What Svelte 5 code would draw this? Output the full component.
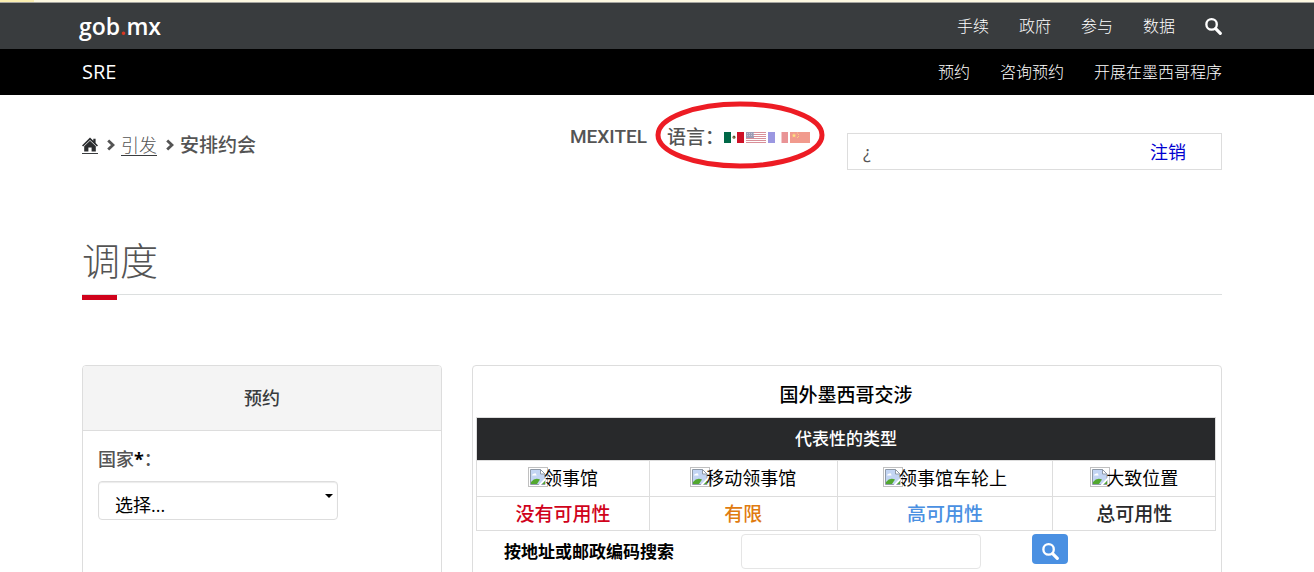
<script lang="ts">
	const topLinks = ['手续', '政府', '参与', '数据'];
	const subLinks = ['预约', '咨询预约', '开展在墨西哥程序'];
	const offices = ['领事馆', '移动领事馆', '领事馆车轮上', '大致位置'];
	const availability = [
		{ label: '没有可用性', tone: 'none' },
		{ label: '有限', tone: 'limited' },
		{ label: '高可用性', tone: 'high' },
		{ label: '总可用性', tone: 'total' },
	];

	let country = $state('');
	let address = $state('');
</script>

{#snippet magnifier()}
	<svg class="magnifier" viewBox="0 0 16 16" aria-hidden="true">
		<circle cx="6.2" cy="6" r="4.9" fill="none" stroke="currentColor" stroke-width="2.2" />
		<path d="M10 10 L14.4 14.4" stroke="currentColor" stroke-width="3" stroke-linecap="round" />
	</svg>
{/snippet}

{#snippet chevron()}
	<svg class="chevron" viewBox="0 0 8 12" aria-hidden="true">
		<path d="M1.2 1.4 L6 6 L1.2 10.6" fill="none" stroke="currentColor" stroke-width="2.8" />
	</svg>
{/snippet}

{#snippet brokenImage()}
	<svg class="broken" viewBox="0 0 20 20" aria-hidden="true">
		<rect x="0.5" y="0.5" width="19" height="19" fill="#fff" stroke="#c0c0c0" />
		<path d="M2.5 2.5 H12.5 L17 7 V17.5 H2.5 Z" fill="#c3d5f3" stroke="#8f9aa8" />
		<path d="M12.5 2.5 V7 H17 Z" fill="#fff" stroke="#8f9aa8" />
		<path d="M4 8.5 Q4.5 6.5 6 6.8 Q8 5.4 8.6 8.5 Z" fill="#fff" />
		<path d="M3 17 V15 Q7 10 12 12.5 L9 17 Z" fill="#52a82f" />
		<path d="M10 18.5 L18.5 9.5 V12 L12.5 18.5 Z" fill="#fff" />
		<path d="M14 17 L17 14 V17 Z" fill="#52a82f" />
	</svg>
{/snippet}

<div class="strip"></div>
<header>
	<nav class="bar top">
		<a class="logo" href="#gob">gob<span>.</span>mx</a>
		<div class="links">
			{#each topLinks as link}
				<a href="#{link}">{link}</a>
			{/each}
			<a href="#search" aria-label="搜索">{@render magnifier()}</a>
		</div>
	</nav>
	<nav class="bar sub">
		<a class="brand" href="#sre">SRE</a>
		<div class="links">
			{#each subLinks as link}
				<a href="#{link}">{link}</a>
			{/each}
		</div>
	</nav>
</header>

<main>
	<div class="tools">
		<nav class="crumbs">
			<a class="home" href="#home" aria-label="首页">
				<svg viewBox="0 0 16 16" aria-hidden="true">
					<path d="M8 0.6 L11.3 3.8 V1.8 H13.6 V6 L16 8.4 L14.9 9.5 L8 2.9 L1.1 9.5 L0 8.4 Z" fill="currentColor" />
					<path d="M8 3.8 L13.8 9.3 V14.6 H9.6 V10.4 H6.4 V14.6 H2.2 V9.3 Z" fill="currentColor" />
				</svg>
			</a>
			{@render chevron()}
			<a href="#start">引发</a>
			{@render chevron()}
			<span class="strong">安排约会</span>
		</nav>
		<div class="locale strong">
			<span class="service">MEXITEL</span>
			<div class="languages">
				<span>语言：</span>
				<div class="flags">
					<button aria-label="Español">
						<svg viewBox="0 0 20 11">
							<path d="M0 0 H20 V11 H0 Z" fill="#fff" />
							<path d="M0 0 H7 V11 H0 Z" fill="#006847" />
							<path d="M13 0 H20 V11 H13 Z" fill="#ce1126" />
							<ellipse cx="10" cy="5.3" rx="1.6" ry="1.8" fill="#86805b" />
							<path d="M9 4 H11 V5.5 H10 Z" fill="#54492b" />
						</svg>
					</button>
					<button class="faded" aria-label="English">
						<svg viewBox="0 0 20 11">
							<path d="M0 0 H20 V11 H0 Z" fill="#fff" />
							<path d="M0 .5 H20 M0 2.5 H20 M0 4.5 H20 M0 6.5 H20 M0 8.5 H20 M0 10.5 H20" stroke="#b22234" />
							<path d="M0 0 H8 V6 H0 Z" fill="#3c3b6e" />
							<path d="M1 1.5 H8 M1 3.5 H8" stroke="#fff" stroke-width=".4" stroke-dasharray="1 1" />
						</svg>
					</button>
					<button class="faded" aria-label="Français">
						<svg viewBox="0 0 20 11">
							<path d="M0 0 H20 V11 H0 Z" fill="#fff" />
							<path d="M0 0 H7 V11 H0 Z" fill="#3a32c4" />
							<path d="M13.5 0 H20 V11 H13.5 Z" fill="#d42b30" />
						</svg>
					</button>
					<button class="faded" aria-label="中文">
						<svg viewBox="0 0 20 11">
							<path d="M0 0 H20 V11 H0 Z" fill="#e4371e" />
							<path d="M4 1 L4.6 2.7 H6.3 L5 3.7 L5.5 5.4 L4 4.4 L2.5 5.4 L3 3.7 L1.7 2.7 H3.4 Z" fill="#ffc800" />
							<path d="M7 1 H8 M8 2.5 H9 M8 4.5 H9 M7 5.5 H8" stroke="#ffc800" stroke-width=".7" />
						</svg>
					</button>
				</div>
				<svg class="ring" viewBox="0 0 170 68" aria-hidden="true">
					<ellipse cx="85" cy="34" rx="82" ry="31" fill="none" stroke="#ed1c24" stroke-width="5" />
				</svg>
			</div>
		</div>
		<div class="session">
			<span>¿</span>
			<a href="#logout">注销</a>
		</div>
	</div>

	<h1>调度</h1>

	<div class="columns">
		<section class="panel">
			<h2>预约</h2>
			<div class="field">
				<label for="country">国家<b>*</b>：</label>
				<div class="select">
					<select id="country" bind:value={country}>
						<option value="">选择...</option>
					</select>
				</div>
			</div>
		</section>

		<section class="panel map">
			<table>
				<caption>国外墨西哥交涉</caption>
				<colgroup>
					<col class="c1" />
					<col class="c2" />
					<col class="c3" />
					<col class="c4" />
				</colgroup>
				<thead>
					<tr><th colspan="4">代表性的类型</th></tr>
				</thead>
				<tbody>
					<tr class="offices">
						{#each offices as office}
							<td><div class="office">{@render brokenImage()}<span>{office}</span></div></td>
						{/each}
					</tr>
					<tr class="levels">
						{#each availability as level}
							<td class={level.tone}>{level.label}</td>
						{/each}
					</tr>
				</tbody>
			</table>
			<form class="search">
				<label for="address">按地址或邮政编码搜索</label>
				<input id="address" type="text" bind:value={address} />
				<button type="button" aria-label="搜索">{@render magnifier()}</button>
			</form>
		</section>
	</div>
</main>

<style>
	:global(body) {
		background: #fff;
		color: #545454;
		font-family: 'Open Sans', 'Noto Sans CJK SC', sans-serif;
		font-size: 18px;
		line-height: 24px;
		overflow: hidden;
	}

	a {
		color: inherit;
		text-decoration: none;
	}

	button {
		border: 0;
		padding: 0;
		background: none;
		cursor: pointer;
	}

	svg {
		display: block;
	}

	.strong {
		font-weight: 500;
		font-size: 19px;
	}

	.strip {
		height: 2px;
		background: linear-gradient(to right, #fbeeb0 34px, #fdf8e1 34px);
		border-bottom: 1px solid #a5a5a0;
	}

	.bar {
		display: flex;
		align-items: center;
		justify-content: space-between;
		height: 46px;
		padding: 0 92px 0 82px;
		color: #fff;
	}

	.top {
		background: #393c3e;
	}

	.sub {
		background: #000;
	}

	.logo {
		margin-left: -3px;
		font-size: 23px;
		font-weight: 600;
	}

	.logo span {
		color: #d9371f;
	}

	.brand {
		font-size: 20px;
	}

	.links {
		display: flex;
		align-items: center;
		gap: 30px;
		font-size: 16px;
		font-weight: 300;
	}

	.magnifier {
		width: 17px;
		height: 17px;
	}

	main {
		padding: 0 92px 0 82px;
	}

	.tools {
		display: grid;
		grid-template-columns: 1fr auto 375px;
		align-items: start;
		padding-top: 30px;
	}

	.crumbs {
		display: flex;
		align-items: center;
		gap: 6px;
		padding-top: 8px;
	}

	.crumbs a {
		border-bottom: 1px solid #393c3e;
		font-weight: 300;
		line-height: 20px;
	}

	.crumbs .home {
		color: #2b2d2f;
	}

	.home svg {
		width: 16px;
		height: 16px;
	}

	.chevron {
		width: 8px;
		height: 12px;
		margin-left: 3px;
	}

	.locale {
		display: flex;
		gap: 20px;
		margin-right: 37px;
	}

	.service {
		font-family: Roboto, sans-serif;
	}

	.languages {
		position: relative;
		display: flex;
		align-items: center;
	}

	.flags {
		display: flex;
		gap: 2px;
	}

	.flags svg {
		width: 20px;
		height: 11px;
	}

	.faded {
		opacity: 0.5;
	}

	.ring {
		position: absolute;
		top: -24px;
		left: -12px;
		width: 170px;
		height: 68px;
		pointer-events: none;
	}

	.session {
		display: flex;
		justify-content: space-between;
		align-items: center;
		height: 35px;
		margin-top: 8px;
		padding: 0 35px 0 15px;
		border: 1px solid #ddd;
	}

	.session a {
		color: #0000d0;
	}

	h1 {
		position: relative;
		margin: 62px 0 70px;
		padding-bottom: 6px;
		border-bottom: 1px solid #dcdfdf;
		font-size: 38px;
		font-weight: 300;
		line-height: 56px;
	}

	h1::after {
		content: '';
		position: absolute;
		top: 100%;
		left: 0;
		width: 35px;
		height: 5px;
		margin-top: 1px;
		background: #d0021b;
	}

	.columns {
		display: grid;
		grid-template-columns: 360fr 750fr;
		gap: 30px;
	}

	.panel {
		min-height: 240px;
		border: 1px solid #ddd;
		border-radius: 4px;
	}

	h2 {
		margin: 0;
		border-bottom: 1px solid #ddd;
		border-radius: 3px 3px 0 0;
		background: #f4f4f4;
		color: #393c3e;
		font-size: 18px;
		font-weight: 500;
		line-height: 64px;
		text-align: center;
	}

	.field {
		display: flex;
		flex-direction: column;
		gap: 10px;
		padding: 16px 15px;
	}

	.field label {
		font-weight: 500;
	}

	.field b {
		color: #000;
	}

	.select {
		position: relative;
		width: 240px;
	}

	.select::after {
		content: '';
		position: absolute;
		top: 13px;
		right: 5px;
		border: 4px solid transparent;
		border-top-color: #000;
		border-bottom: 0;
		pointer-events: none;
	}

	select {
		appearance: none;
		width: 100%;
		height: 39px;
		padding: 8px 16px 0;
		border: 1px solid #ddd;
		border-radius: 4px;
		background: #fff;
		box-shadow: inset 0 1px 1px rgba(0, 0, 0, 0.08);
		color: #000;
		font: inherit;
	}

	.map {
		padding: 0 5px 0 3px;
		color: #000;
	}

	table {
		width: 100%;
		border-collapse: collapse;
		table-layout: fixed;
	}

	caption {
		padding: 17px 0 10px;
		font-size: 19px;
		font-weight: 500;
	}

	.c1 {
		width: 23.4%;
	}

	.c2 {
		width: 25.4%;
	}

	.c3 {
		width: 29.2%;
	}

	.c4 {
		width: 22%;
	}

	th,
	td {
		padding: 0;
		border: 1px solid #ddd;
		text-align: center;
	}

	th {
		height: 42px;
		background: #28292b;
		color: #fff;
		font-size: 17px;
		font-weight: 500;
	}

	.offices td {
		height: 35px;
	}

	.office {
		display: flex;
		align-items: center;
		justify-content: center;
		padding-bottom: 2px;
	}

	.broken {
		width: 20px;
		height: 20px;
		margin: -2px -4px 0 0;
	}

	.levels td {
		height: 33px;
		font-size: 19px;
		font-weight: 500;
	}

	.levels .none {
		color: #d0021b;
	}

	.levels .limited {
		color: #e07b10;
	}

	.levels .high {
		color: #4a90e2;
	}

	.levels .total {
		color: #28292b;
	}

	.search {
		display: grid;
		grid-template-columns: 237px 240px 36px;
		align-items: start;
		padding: 3px 0 0 28px;
	}

	.search label {
		font-size: 17px;
		font-weight: 700;
		line-height: 35px;
	}

	.search input {
		box-sizing: border-box;
		height: 35px;
		padding: 0 12px;
		border: 1px solid #e5e5e5;
		border-radius: 4px;
		font: inherit;
	}

	.search button {
		display: grid;
		place-items: center;
		width: 36px;
		height: 30px;
		margin-left: 51px;
		padding-top: 4px;
		border-radius: 4px;
		background: #4a90e2;
		color: #fff;
	}
</style>
